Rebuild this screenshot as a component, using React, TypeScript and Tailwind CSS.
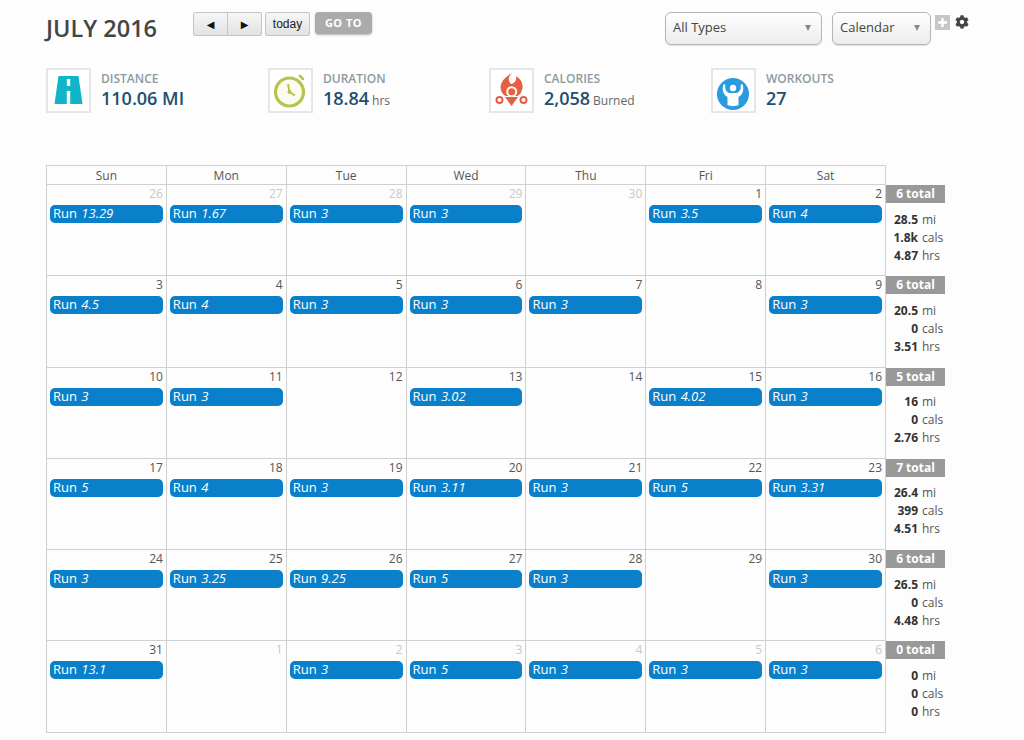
import { FaCog } from "react-icons/fa"

type Day = { n: number; muted?: boolean; run?: string }
type Week = { days: Day[]; total: number; mi: string; cals: string; hrs: string }

const mk = (start: number[], runs: (string | null)[], muted: boolean[]): Day[] =>
    start.map((n, i) => ({ n, muted: muted[i], run: runs[i] ?? undefined }))

const none = [false, false, false, false, false, false, false]

const weeks: Week[] = [
    { days: mk([26, 27, 28, 29, 30, 1, 2], ["13.29", "1.67", "3", "3", null, "3.5", "4"], [true, true, true, true, true, false, false]), total: 6, mi: "28.5", cals: "1.8k", hrs: "4.87" },
    { days: mk([3, 4, 5, 6, 7, 8, 9], ["4.5", "4", "3", "3", "3", null, "3"], none), total: 6, mi: "20.5", cals: "0", hrs: "3.51" },
    { days: mk([10, 11, 12, 13, 14, 15, 16], ["3", "3", null, "3.02", null, "4.02", "3"], none), total: 5, mi: "16", cals: "0", hrs: "2.76" },
    { days: mk([17, 18, 19, 20, 21, 22, 23], ["5", "4", "3", "3.11", "3", "5", "3.31"], none), total: 7, mi: "26.4", cals: "399", hrs: "4.51" },
    { days: mk([24, 25, 26, 27, 28, 29, 30], ["3", "3.25", "9.25", "5", "3", null, "3"], none), total: 6, mi: "26.5", cals: "0", hrs: "4.48" },
    { days: mk([31, 1, 2, 3, 4, 5, 6], ["13.1", null, "3", "5", "3", "3", "3"], [false, true, true, true, true, true, true]), total: 0, mi: "0", cals: "0", hrs: "0" },
]

const dayNames = ["Sun", "Mon", "Tue", "Wed", "Thu", "Fri", "Sat"]

function RoadIcon() {
    return (
        <svg viewBox="0 0 41 41" className="w-[41px] h-[41px]">
            <path d="M10.5 6H30.5L34.5 34H6.5Z" fill="#10b5c9" />
            <rect x="18.8" y="9" width="3.4" height="7" fill="#fff" />
            <rect x="18.8" y="21" width="3.4" height="13" fill="#fff" />
        </svg>
    )
}

function ClockIcon() {
    return (
        <svg viewBox="0 0 41 41" className="w-[41px] h-[41px]">
            <circle cx="19.5" cy="22" r="14" fill="#fbfbf0" stroke="#b5c44c" strokeWidth="3.2" />
            <path d="M30 6l3 3" stroke="#b5c44c" strokeWidth="2.6" strokeLinecap="round" />
            <path d="M18 14L19.5 22L25 25.5" fill="none" stroke="#b5c44c" strokeWidth="2" />
            <circle cx="19.5" cy="22" r="2" fill="#b5c44c" />
        </svg>
    )
}

function FlameIcon() {
    return (
        <svg viewBox="0 0 41 41" className="w-[41px] h-[41px]">
            <path d="M21 3C18 6 16 10 20 14C25 13 26 8 25 6C30 9 33 14 31 20C30 24 27 26 26 26H16C14 26 11 24 10 20C8 13 14 7 21 3Z" fill="#e6603f" />
            <circle cx="20.7" cy="21.7" r="4.5" fill="#e6603f" stroke="#fff" strokeWidth="2" />
            <path d="M14 27H27L20.5 36Z" fill="#e6603f" />
            <circle cx="8.5" cy="30" r="3" fill="#fff" stroke="#e6603f" strokeWidth="2" />
            <circle cx="32.5" cy="30" r="3" fill="#fff" stroke="#e6603f" strokeWidth="2" />
        </svg>
    )
}

function PersonIcon() {
    return (
        <svg viewBox="0 0 41 41" className="w-[41px] h-[41px]">
            <circle cx="20" cy="24" r="16" fill="#2b9be0" />
            <path d="M10.5 14C8.5 20 10.5 25 14.5 27V35C17.5 36.5 22.5 36.5 25.5 35V27C29.5 25 31.5 20 29.5 14L27.5 15C28.5 19 26.5 22.5 23.5 23H16.5C13.5 22.5 11.5 19 12.5 15Z" fill="#fff" />
            <circle cx="20" cy="18" r="3.2" fill="#fff" />
        </svg>
    )
}

function Stat({ icon, label, value, unit, width }: { icon: React.ReactNode; label: string; value: string; unit?: string; width: string }) {
    return (
        <div className={`flex ${width}`}>
            <div className="w-[45px] h-[45px] border-2 border-[#e6e6e6] bg-white flex items-center justify-center shrink-0">
                {icon}
            </div>
            <div className="ml-[10px]">
                <div className="text-[12px] leading-[16px] mt-[3px] font-semibold text-[#8e9a9f]">{label}</div>
                <div className="text-[18px] leading-[23px] font-semibold text-[#234e6d]">
                    {value}
                    {unit && <span className="text-[12px] font-normal text-[#666] ml-[3px]">{unit}</span>}
                </div>
            </div>
        </div>
    )
}

function SelectBox({ label, width }: { label: string; width: string }) {
    return (
        <div className={`${width} h-[33px] border border-[#b5b5b5] rounded-[6px] bg-gradient-to-b from-white to-[#ececec] shadow-[0_1px_1px_rgba(0,0,0,0.12)] flex items-center justify-between pl-[7px] pr-[10px] pb-[2px] text-[13px] text-[#444]`}>
            <span>{label}</span>
            <span className="w-0 h-0 border-x-[3.5px] border-x-transparent border-t-[6px] border-t-[#888]" />
        </div>
    )
}

export default function App() {
    return (
        <div className="w-[1024px] h-[740px] overflow-hidden bg-[#fdfdfd] font-['Open_Sans',sans-serif]">
            <div className="flex items-start pt-[12px] pl-[46px] h-[68px]">
                <h1 className="w-[147px] text-[23.5px] leading-[32px] font-semibold text-[#444]">JULY 2016</h1>
                <div className="flex h-[24px] border border-[#c4c4c4] rounded-[2px] bg-gradient-to-b from-[#f6f6f6] to-[#e2e2e2] text-[#111]">
                    <div className="w-[34px] flex items-center justify-center border-r border-[#c4c4c4] text-[10px] font-['DejaVu_Sans',sans-serif]">◀</div>
                    <div className="w-[33px] flex items-center justify-center text-[10px] font-['DejaVu_Sans',sans-serif]">▶</div>
                </div>
                <div className="ml-[3px] w-[45px] h-[24px] flex items-center justify-center border border-[#c4c4c4] rounded-[2px] bg-gradient-to-b from-[#f6f6f6] to-[#e2e2e2] text-[12px] text-[#222] font-['Liberation_Sans',sans-serif]">today</div>
                <div className="ml-[5px] w-[57px] h-[22px] flex items-center justify-center rounded-[4px] bg-[#ababab] shadow-[0_1px_2px_rgba(0,0,0,0.3)] text-[11px] font-bold tracking-[0.5px] text-white">GO TO</div>
                <div className="ml-[293px] flex items-start">
                    <SelectBox label="All Types" width="w-[157px]" />
                    <div className="w-[10px]" />
                    <SelectBox label="Calendar" width="w-[99px]" />
                    <div className="ml-[4px] mt-[3px] w-[15px] h-[15px] bg-[#c6c6c6] flex items-center justify-center text-white">
                        <svg viewBox="0 0 15 15" className="w-[15px] h-[15px]">
                            <path d="M7.5 3v9M3 7.5h9" stroke="#fff" strokeWidth="2.4" />
                        </svg>
                    </div>
                    <FaCog className="ml-[5px] mt-[3px] w-[14px] h-[14px] text-[#444]" />
                </div>
            </div>

            <div className="flex pl-[46px] h-[97px]">
                <Stat width="w-[222px]" icon={<RoadIcon />} label="DISTANCE" value="110.06 MI" />
                <Stat width="w-[221px]" icon={<ClockIcon />} label="DURATION" value="18.84" unit="hrs" />
                <Stat width="w-[222px]" icon={<FlameIcon />} label="CALORIES" value="2,058" unit="Burned" />
                <Stat width="w-[222px]" icon={<PersonIcon />} label="WORKOUTS" value="27" />
            </div>

            <div className="pl-[46px]">
                <div className="flex w-[840px] border border-[#d0d0d0] bg-[#fdfdfd]">
                    {dayNames.map((d, i) => (
                        <div key={d} className={`h-[18px] pt-[1px] flex items-center justify-center text-[12px] text-[#555] ${i === 6 ? "w-[119px]" : "w-[120px] border-r border-[#d0d0d0]"}`}>
                            {d}
                        </div>
                    ))}
                </div>
                {weeks.map((w, wi) => (
                    <div key={wi} className="flex h-[91.3px]">
                        <div className="flex w-[840px] border-x border-b border-[#d0d0d0]">
                            {w.days.map((d, i) => (
                                <div key={i} className={`px-[3px] ${i === 6 ? "w-[119px]" : "w-[120px] border-r border-[#d0d0d0]"}`}>
                                    <div className={`text-right text-[12px] leading-[17px] ${d.muted ? "text-[#c8c8c8]" : "text-[#555]"}`}>{d.n}</div>
                                    {d.run && (
                                        <div className="mt-[3px] h-[18px] rounded-[5px] bg-[#0a7fca] text-white text-[13px] leading-[17px] pl-[3px] whitespace-nowrap">
                                            Run <i className="ml-[1px]">{d.run}</i>
                                        </div>
                                    )}
                                </div>
                            ))}
                        </div>
                        <div className="w-[59px]">
                            <div className="h-[18px] bg-[#999] text-white text-[12px] font-bold leading-[18px] text-center">{w.total} total</div>
                            <div className="grid grid-cols-[32px_auto] gap-x-[4px] mt-[7.5px] text-[12px] leading-[18px] text-[#555]">
                                <b className="text-right font-bold text-[#333]">{w.mi}</b><span>mi</span>
                                <b className="text-right font-bold text-[#333]">{w.cals}</b><span>cals</span>
                                <b className="text-right font-bold text-[#333]">{w.hrs}</b><span>hrs</span>
                            </div>
                        </div>
                    </div>
                ))}
            </div>
        </div>
    )
}
